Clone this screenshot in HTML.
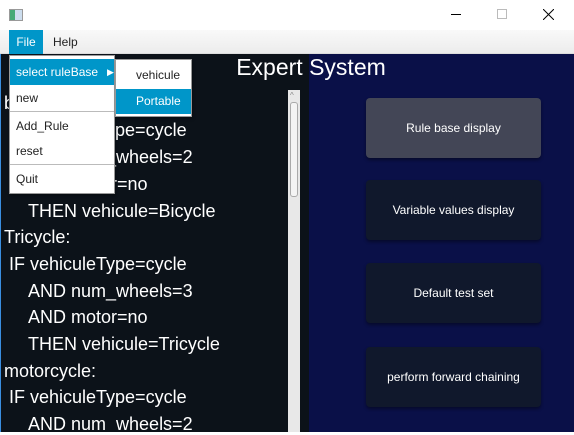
<!DOCTYPE html>
<html><head><meta charset="utf-8"><style>
*{margin:0;padding:0;box-sizing:border-box}
body{width:574px;height:432px;overflow:hidden;position:relative;background:#fff;font-family:"Liberation Sans",sans-serif}
.abs{position:absolute}
#title{left:0;top:0;width:574px;height:30px;background:#fff}
#menubar{left:0;top:30px;width:574px;height:24px;background:linear-gradient(#f9f9f9,#ececec);border-bottom:1px solid #ddd}
#left{left:0;top:54px;width:309px;height:378px;background:#0c1219;border-left:1px solid #3a8ee0}
#right{left:309px;top:54px;width:265px;height:378px;background:#0a1048}
.ln{position:absolute;color:#fff;font-size:18px;white-space:pre;left:3px}
.i1{left:8px}.i2{left:27px}
.btn{position:absolute;left:366px;width:175px;height:60px;background:#10182c;border-radius:4px;color:#fff;font-size:12px;display:flex;align-items:center;justify-content:center;box-shadow:0 2px 3px rgba(0,0,0,.4)}
.menu{background:#fff;border:1px solid #999;box-shadow:1px 2px 3px rgba(0,0,0,.3);font-size:12px;color:#222}
.mi{position:absolute;left:0;width:100%;padding-left:6px}
.sep{position:absolute;left:0;width:100%;border-top:1px solid #bbb}
</style></head><body>
<div id="title" class="abs">
  <div class="abs" style="left:9px;top:9px;width:14px;height:12px;border:1px solid #999;background:linear-gradient(90deg,#4a7 0 40%,#cde 40%)"></div>
  <div class="abs" style="left:451px;top:14px;width:10px;height:1px;background:#000"></div>
  <div class="abs" style="left:497px;top:9px;width:10px;height:10px;border:1px solid #bbb"></div>
  <svg class="abs" style="left:543px;top:9px" width="11" height="11"><path d="M0 0L11 11M11 0L0 11" stroke="#000" stroke-width="1"/></svg>
</div>
<div id="menubar" class="abs">
  <div class="abs" style="left:9px;top:0;width:34px;height:24px;background:#0096c9;color:#fff;font-size:12px;line-height:24px;text-align:center">File</div>
  <div class="abs" style="left:53px;top:0;height:24px;color:#222;font-size:12px;line-height:24px">Help</div>
</div>
<div id="left" class="abs">
  <div class="ln" style="top:39px">bicycle:</div>
  <div class="ln i1" style="top:66px">IF vehiculeType=cycle</div>
  <div class="ln i2" style="top:93px">AND num_wheels=2</div>
  <div class="ln i2" style="top:120px">AND motor=no</div>
  <div class="ln i2" style="top:147px">THEN vehicule=Bicycle</div>
  <div class="ln" style="top:173px">Tricycle:</div>
  <div class="ln i1" style="top:200px">IF vehiculeType=cycle</div>
  <div class="ln i2" style="top:227px">AND num_wheels=3</div>
  <div class="ln i2" style="top:253px">AND motor=no</div>
  <div class="ln i2" style="top:280px">THEN vehicule=Tricycle</div>
  <div class="ln" style="top:307px">motorcycle:</div>
  <div class="ln i1" style="top:333px">IF vehiculeType=cycle</div>
  <div class="ln i2" style="top:360px">AND num_wheels=2</div>
  <div class="abs" style="left:287px;top:36px;width:12px;height:342px;background:#e8e8e8">
    <div class="abs" style="left:2px;top:1px;font-size:8px;color:#888">^</div>
    <div class="abs" style="left:2px;top:12px;width:8px;height:95px;border:1px solid #aaa;border-radius:3px;background:#f4f4f4"></div>
  </div>
</div>
<div id="right" class="abs"></div>
<div class="abs" style="left:0;top:54px;width:574px;text-align:center;color:#fff;font-size:23px;padding-left:48px">Expert System</div>
<div class="btn" style="top:98px;background:#434656">Rule base display</div>
<div class="btn" style="top:180px">Variable values display</div>
<div class="btn" style="top:263px">Default test set</div>
<div class="btn" style="top:347px">perform forward chaining</div>
<div class="abs menu" style="left:9px;top:55px;width:106px;height:139px">
  <div class="mi" style="top:3px;height:26px;line-height:26px;background:#0096c9;color:#fff">select ruleBase<span style="position:absolute;left:97px;font-size:9px">▶</span></div>
  <div class="mi" style="top:30px;height:24px;line-height:24px">new</div>
  <div class="sep" style="top:55px"></div>
  <div class="mi" style="top:58px;height:24px;line-height:24px">Add_Rule</div>
  <div class="mi" style="top:83px;height:24px;line-height:24px">reset</div>
  <div class="sep" style="top:108px"></div>
  <div class="mi" style="top:111px;height:24px;line-height:24px">Quit</div>
</div>
<div class="abs menu" style="left:115px;top:59px;width:77px;height:58px">
  <div class="mi" style="top:3px;height:25px;line-height:25px;padding-left:20px">vehicule</div>
  <div class="mi" style="top:29px;height:25px;line-height:25px;padding-left:20px;background:#0096c9;color:#fff">Portable</div>
</div>
</body></html>
